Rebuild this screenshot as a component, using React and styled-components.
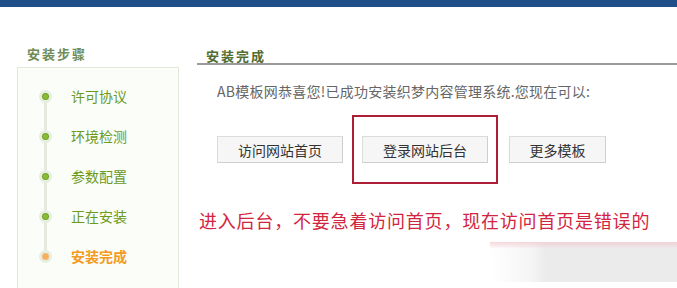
import React from 'react';
import styled, { createGlobalStyle } from 'styled-components';

const GlobalStyle = createGlobalStyle`
	html, body {
		margin: 0;
		padding: 0;
		background: #fff;
		font-family: 'Noto Sans CJK SC', 'Liberation Sans', sans-serif;
	}
`;

const TopBar = styled.div`
	height: 7px;
	background: #1f4e88;
`;

const Page = styled.div`
	display: flex;
	height: 281px;
	overflow: hidden;
`;

const Sidebar = styled.div`
	width: 162px;
	margin-left: 17px;
	padding-top: 38px;
	display: flex;
	flex-direction: column;
`;

const SideTitle = styled.h3`
	margin: 0 0 0 10px;
	height: 22px;
	font-size: 13px;
	line-height: 18px;
	font-weight: 700;
	letter-spacing: 2px;
	color: #6f8b56;
`;

const StepPanel = styled.ul`
	list-style: none;
	margin: 0;
	padding: 8px 0 0 0;
	flex: 1;
	background: #fbfdf8;
	border: 1px solid #e3e9db;
	border-bottom: none;
`;

const Step = styled.li`
	position: relative;
	display: flex;
	align-items: center;
	height: 40px;
	padding-left: 53px;
	font-size: 14px;
	font-weight: ${({ $active }) => ($active ? 700 : 400)};
	color: ${({ $active }) => ($active ? '#f39a1f' : '#6b9a1c')};

	&::before {
		content: '';
		position: absolute;
		left: 26px;
		top: ${({ $first }) => ($first ? '20px' : '0')};
		bottom: ${({ $last }) => ($last ? '20px' : '0')};
		width: 3px;
		background: #e4ebdc;
	}
`;

const Dot = styled.span`
	position: absolute;
	left: 21px;
	top: 14px;
	width: 7px;
	height: 7px;
	border-radius: 50%;
	background: ${({ $active }) => ($active ? '#f7ae5a' : '#8cbb36')};
	border: 3px solid #e6eedf;
	box-shadow: inset 0 0 0 1px ${({ $active }) => ($active ? '#f0b878' : '#6f9e24')};
`;

const Main = styled.div`
	flex: 1;
	margin-left: 18px;
	padding-top: 40px;
	display: flex;
	flex-direction: column;
`;

const MainTitle = styled.h3`
	margin: 0;
	padding-left: 9px;
	height: 16px;
	font-size: 13px;
	line-height: 18px;
	font-weight: 700;
	letter-spacing: 2px;
	color: #4f6c33;
	border-bottom: 2px solid #9b9b9b;
`;

const Body = styled.div`
	padding-left: 20px;
	display: flex;
	flex-direction: column;
`;

const Intro = styled.p`
	margin: 16px 0 0;
	font-size: 14px;
	line-height: 20px;
	color: #666;
	letter-spacing: 0.25px;
`;

const ButtonRow = styled.div`
	display: flex;
	align-items: center;
	margin-top: 14px;
`;

const Button = styled.button`
	width: ${({ $w }) => $w}px;
	height: 27px;
	padding: 0;
	font-family: inherit;
	font-size: 14px;
	color: #333;
	background: #f6f6f6;
	border: 1px solid #dcdcdc;
	border-right-color: #cfcfcf;
	border-bottom-color: #cfcfcf;
`;

const Highlight = styled.div`
	margin: 0 11px 0 9px;
	padding: 19px 8px;
	border: 2px solid #ad1d36;
`;

const Warning = styled.p`
	margin: 24px 0 0 -18px;
	font-size: 18px;
	line-height: 24px;
	color: #d3243f;
	letter-spacing: 0.8px;
`;

const Smudge = styled.div`
	align-self: flex-end;
	margin-top: 10px;
	width: 187px;
	height: 40px;
	background:
		linear-gradient(to bottom, rgba(240, 200, 205, 0.7) 0, rgba(255, 255, 255, 0) 7px),
		linear-gradient(to right, #fff 0, #f5f5f5 22%, #ebebeb 30%, #ebebeb 100%);
`;

const steps = ['许可协议', '环境检测', '参数配置', '正在安装', '安装完成'];

const App = () => {
	return (
		<>
			<GlobalStyle />
			<TopBar />
			<Page>
				<Sidebar>
					<SideTitle>安装步骤</SideTitle>
					<StepPanel>
						{steps.map((s, i) => (
							<Step
								key={s}
								$first={i === 0}
								$last={i === steps.length - 1}
								$active={i === steps.length - 1}>
								<Dot $active={i === steps.length - 1} />
								{s}
							</Step>
						))}
					</StepPanel>
				</Sidebar>
				<Main>
					<MainTitle>安装完成</MainTitle>
					<Body>
						<Intro>AB模板网恭喜您!已成功安装织梦内容管理系统.您现在可以:</Intro>
						<ButtonRow>
							<Button $w={126}>访问网站首页</Button>
							<Highlight>
								<Button $w={126}>登录网站后台</Button>
							</Highlight>
							<Button $w={97}>更多模板</Button>
						</ButtonRow>
						<Warning>进入后台，不要急着访问首页，现在访问首页是错误的</Warning>
					</Body>
					<Smudge />
				</Main>
			</Page>
		</>
	);
};

export default App;
